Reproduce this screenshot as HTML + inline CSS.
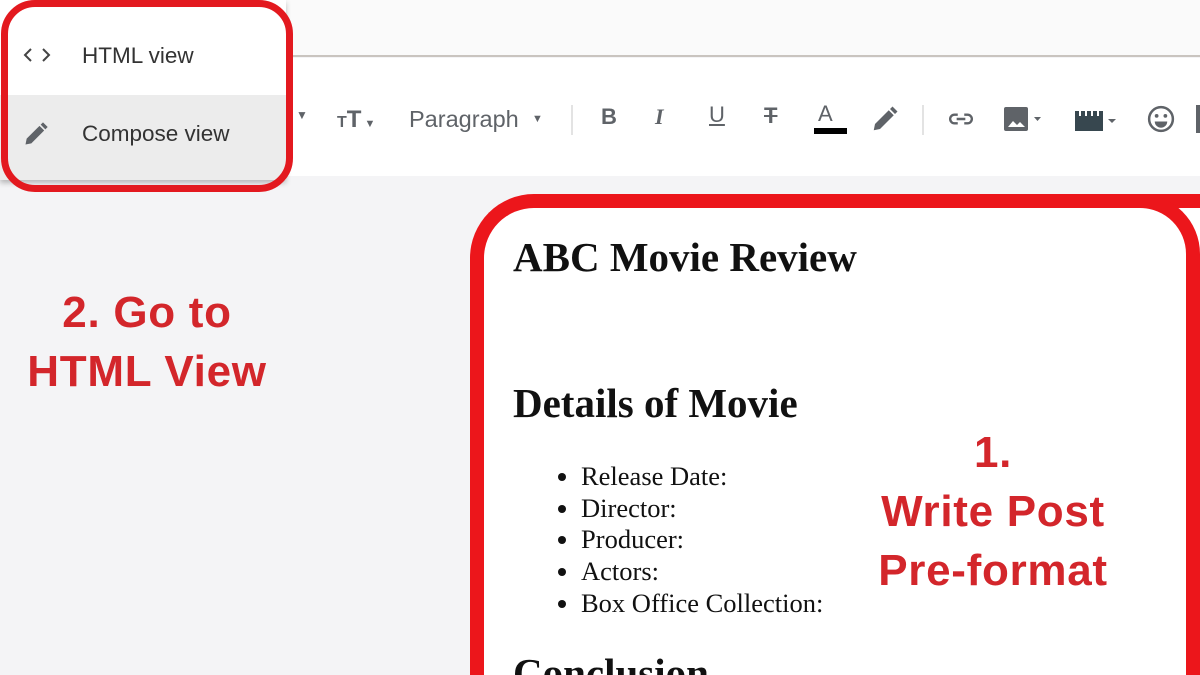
<!DOCTYPE html>
<html style="overflow:hidden;width:1200px;height:675px"><head><meta charset="utf-8"><style>
*{margin:0;padding:0;box-sizing:border-box}
body{width:1200px;height:675px;overflow:hidden;background:#f4f4f6;position:relative;font-family:"Liberation Sans",sans-serif}
.abs{position:absolute}
.top{left:0;top:0;width:1200px;height:57px;background:#fafafa;border-bottom:2px solid #c9c4bf}
.tool{left:0;top:58px;width:1200px;height:118px;background:#fff}
.tb{color:#5f6368;font-size:22px}
.menu{left:0;top:0;width:286px;height:180px;background:#fff;box-shadow:0 3px 5px rgba(0,0,0,.25)}
.ann{color:#d3262b;font-weight:bold;font-size:44px;letter-spacing:.7px;text-align:center;line-height:59px}
.serif{font-family:"Liberation Serif",serif;color:#111;white-space:nowrap}
</style></head><body>
<div class="abs" style="left:0;top:0;width:1200px;height:675px;overflow:hidden">
<div class="abs top"></div>
<div class="abs tool"></div>
<div class="abs tb" style="left:296px;top:108px;font-size:12px">▼</div>
<div class="abs tb" style="left:337px;top:106px;font-weight:bold;font-size:24px"><span style="font-size:16px">T</span>T<span style="font-size:11px"> ▼</span></div>
<div class="abs tb" style="left:409px;top:106px;font-size:23.5px">Paragraph</div>
<div class="abs tb" style="left:532px;top:113px;font-size:11px">▼</div>
<div class="abs" style="left:571px;top:105px;width:2px;height:30px;background:#e3e3e3"></div>
<div class="abs tb" style="left:601px;top:104px;font-weight:bold">B</div>
<div class="abs tb" style="left:655px;top:104px;font-style:italic;font-weight:bold;font-family:'Liberation Serif',serif">I</div>
<div class="abs tb" style="left:709px;top:102px;text-decoration:underline">U</div>
<div class="abs tb" style="left:764px;top:103px;text-decoration:line-through;font-weight:bold">T</div>
<div class="abs tb" style="left:818px;top:101px">A</div>
<div class="abs" style="left:814px;top:128px;width:33px;height:6px;background:#000"></div>
<svg class="abs" style="left:870px;top:104px" width="30" height="30" viewBox="0 0 24 24"><path d="M3 21l1-5L15 5l4 4L8 20z M16 4l2-2 4 4-2 2z" fill="#5f6368"/></svg>
<div class="abs" style="left:922px;top:105px;width:2px;height:30px;background:#e3e3e3"></div>
<svg class="abs" style="left:946px;top:106px" width="30" height="26" viewBox="0 0 24 24"><path d="M9 8H6a4 4 0 000 8h3M15 8h3a4 4 0 010 8h-3M8 12h8" stroke="#5f6368" stroke-width="2.2" fill="none"/></svg>
<svg class="abs" style="left:1003px;top:106px" width="40" height="28" viewBox="0 0 40 28"><rect x="1" y="1" width="24" height="24" rx="2" fill="#5f6368"/><path d="M5 21l5-6 4 4 3-3 5 5z" fill="#fff"/><path d="M31 11h7l-3.5 4z" fill="#5f6368"/></svg>
<svg class="abs" style="left:1074px;top:108px" width="48" height="24" viewBox="0 0 48 24"><rect x="1" y="3" width="28" height="20" fill="#37474f"/><path d="M6 3v5M12 3v5M18 3v5M24 3v5" stroke="#fff" stroke-width="2"/><path d="M34 11h8l-4 4z" fill="#5f6368"/></svg>
<svg class="abs" style="left:1146px;top:104px" width="30" height="30" viewBox="0 0 24 24"><circle cx="12" cy="12" r="9.5" stroke="#5f6368" stroke-width="2" fill="none"/><circle cx="8.5" cy="9.5" r="1.5" fill="#5f6368"/><circle cx="15.5" cy="9.5" r="1.5" fill="#5f6368"/><path d="M7 14a5 5 0 0010 0z" fill="#5f6368"/></svg>
<div class="abs" style="left:1196px;top:105px;width:4px;height:28px;background:#5f6368"></div>
<div class="abs menu">
 <div class="abs" style="left:0;top:95px;width:286px;height:85px;background:#ececec"></div>
 <svg class="abs" style="left:22px;top:46px" width="30" height="18" viewBox="0 0 30 18"><path d="M9 3L3 9l6 6M21 3l6 6-6 6" stroke="#444" stroke-width="2" fill="none"/></svg>
 <div class="abs" style="left:82px;top:43px;font-size:22.5px;color:#333">HTML view</div>
 <svg class="abs" style="left:22px;top:120px" width="28" height="28" viewBox="0 0 24 24"><path d="M3 21l1-5L15 5l4 4L8 20z M16 4l2-2 4 4-2 2z" fill="#5f6368"/></svg>
 <div class="abs" style="left:82px;top:121px;font-size:22.5px;color:#333">Compose view</div>
</div>
<div class="abs" style="left:1px;top:0;width:292px;height:192px;border:7px solid #e3191f;border-radius:34px"></div>
<div class="abs ann" style="left:0;top:283px;width:294px">2. Go to<br>HTML View</div>
<div class="abs" style="left:470px;top:194px;width:730px;height:481px;border:14px solid #ec161b;border-bottom:0;border-right:0;border-radius:64px 0 0 0;background:#fff"></div>
<div class="abs" style="left:1140px;top:194px;width:60px;height:481px;border-top:14px solid #ec161b;border-right:14px solid #ec161b;border-radius:0 64px 0 0;background:#fff"></div>
<div class="abs serif" style="left:513px;top:233px;font-size:41px;font-weight:bold">ABC Movie Review</div>
<div class="abs serif" style="left:513px;top:379px;font-size:41px;font-weight:bold">Details of Movie</div>
<ul class="abs serif" style="left:581px;top:461px;font-size:26.5px;line-height:31.7px;width:300px">
<li>Release Date:</li><li>Director:</li><li>Producer:</li><li>Actors:</li><li>Box Office Collection:</li></ul>
<div class="abs serif" style="left:513px;top:650px;height:25px;overflow:hidden;font-size:41px;line-height:47px;font-weight:bold">Conclusion</div>
<div class="abs ann" style="left:840px;top:423px;width:306px">1.<br>Write Post<br>Pre-format</div>
</div>
</body></html>
